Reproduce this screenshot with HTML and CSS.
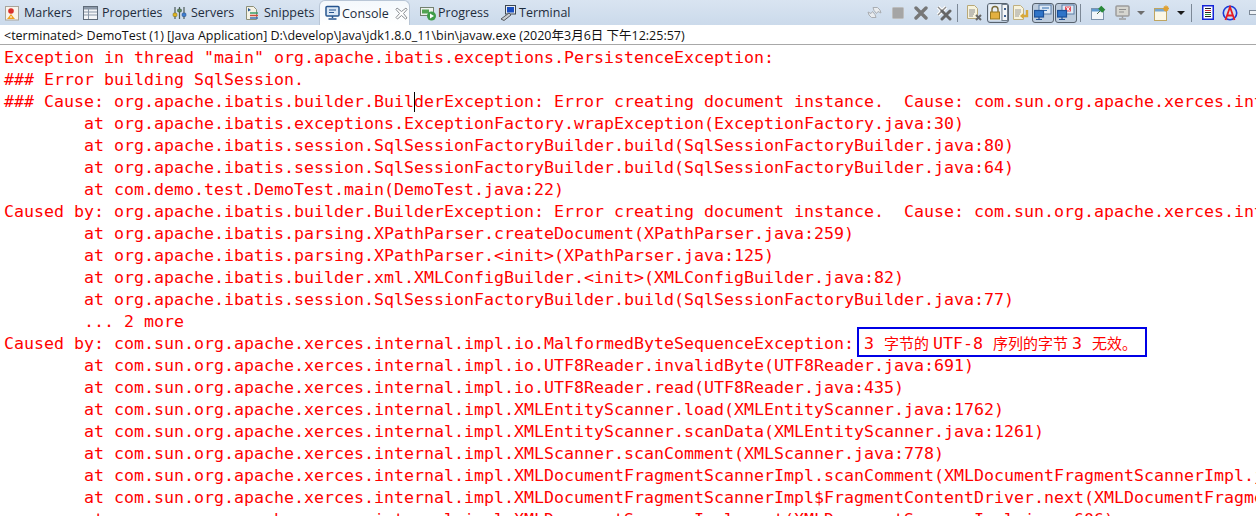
FILE: index.html
```html
<!DOCTYPE html>
<html lang="en">
<head>
<meta charset="utf-8">
<title>Console</title>
<link rel="stylesheet" href="styles.css">
</head>
<body>
<div class="view">
  <header class="bar">
    <nav class="tabs">
      <div class="tab tab-markers">
        <svg class="ico" width="16" height="16" viewBox="0 0 16 16"><rect x="1.500" y="1.500" width="13" height="13.500" fill="#f8f4ec" stroke="#a9a49a"/><circle cx="7" cy="6" r="2.800" fill="#d8302c"/><path d="M7 9l4 5H3z" fill="#f0a020"/><path d="M7 11v2" stroke="#fff"/></svg>
        <span>Markers</span>
      </div>
      <div class="tab tab-properties">
        <svg class="ico" width="15" height="14" viewBox="0 0 15 14"><rect x=".5" y=".5" width="14" height="13" fill="#f4f6f8" stroke="#5f6b78"/><rect x="1" y="1" width="13" height="2.500" fill="#8b98a8"/><path d="M5.500 3v10M1 6h13M1 9h13" stroke="#8b98a8" fill="none"/></svg>
        <span>Properties</span>
      </div>
      <div class="tab tab-servers">
        <svg class="ico" width="15" height="16" viewBox="0 0 15 16"><path d="M3 2v12M7.500 2v12M12 2v12" stroke="#4c5a58" stroke-width="1.200"/><rect x="1" y="8" width="4" height="3.500" rx="1" fill="#e2b420" stroke="#6f6a20" stroke-width=".5"/><rect x="5.500" y="4" width="4" height="3" rx="1" fill="#5a8a5a" stroke="#3a4a3a" stroke-width=".5"/><rect x="10" y="8" width="4" height="3.500" rx="1" fill="#3f7fd0" stroke="#274a80" stroke-width=".5"/></svg>
        <span>Servers</span>
      </div>
      <div class="tab tab-snippets">
        <svg class="ico" width="15" height="16" viewBox="0 0 15 16"><path d="M1.500 1.500h7l3 3v10h-10z" fill="#f4f2e6" stroke="#8c8f78"/><path d="M5 8h8" stroke="#3d9c6a" stroke-width="1.500"/><path d="M5 10.500h8" stroke="#d24a3a" stroke-width="1.500"/><path d="M5 13h8" stroke="#3d6cb0" stroke-width="1.500"/><path d="M3 3v3.500l3-1.500z" fill="#27558f"/></svg>
        <span>Snippets</span>
      </div>
      <div class="tab tab-console">
        <svg class="ico" width="15" height="16" viewBox="0 0 15 16"><rect x="1" y="1.500" width="13" height="9.500" rx="1" fill="#dbe8f6" stroke="#27558f" stroke-width="1.500"/><path d="M4 5h7M4 7.500h5" stroke="#27558f"/><path d="M7.500 11v2M3.500 14h8" stroke="#27558f" stroke-width="1.500"/></svg>
        <span>Console</span>
        <svg class="close" width="13" height="13" viewBox="0 0 13 13"><path d="M2 1l4.500 3.500L11 1l1 1.500L8.500 6.500 12 11l-1.500 1-4-3.500L2.500 12 1 10.500l3.500-4L1 2.500z" fill="#fff" stroke="#8b8f94"/></svg>
      </div>
      <div class="tab tab-progress">
        <svg class="ico" width="16" height="16" viewBox="0 0 16 16"><rect x=".5" y="2.500" width="13" height="8" fill="#eef2ee" stroke="#74806f"/><rect x="2" y="4.500" width="7" height="4" fill="#52a452"/><circle cx="11.500" cy="11" r="4.500" fill="#3f9c48"/><path d="M10 8.500l4 2.500-4 2.500z" fill="#fff"/></svg>
        <span>Progress</span>
      </div>
      <div class="tab tab-terminal">
        <svg class="ico" width="16" height="16" viewBox="0 0 16 16"><rect x="5.500" y=".5" width="10" height="8.500" fill="#e8ecf0" stroke="#3c4650"/><rect x="7" y="2" width="7" height="5.500" fill="#1a4fc0"/><path d="M1 14L9 8l2 2-7 5.500z" fill="#c8ccd0" stroke="#55595e"/></svg>
        <span>Terminal</span>
      </div>
    </nav>
    <div class="tools">
      <svg class="tool t-relaunch" width="15" height="15" viewBox="0 0 15 15"><path d="M6 2.500h4.500L13 5l1 3-3-1.500-1.500 2L7 5.500zM9 12.500H4.500L2 10 1 7l3 1.500 1.500-2L8 9.500z" fill="#e9ecef" stroke="#a9adb2"/></svg>
      <svg class="tool t-stop" width="12" height="12" viewBox="0 0 12 12"><rect x=".5" y=".5" width="11" height="11" rx="1" fill="#a5a5a5" stroke="#bdbdbd"/></svg>
      <svg class="tool t-x" width="14" height="14" viewBox="0 0 14 14"><path d="M2 2l10 10M12 2L2 12" stroke="#777" stroke-width="3.400" stroke-linecap="round"/></svg>
      <svg class="tool t-xx" width="16" height="16" viewBox="0 0 16 16"><path d="M2 2l8 8M10 2l-8 8" stroke="#fff" stroke-width="3.600"/><path d="M2 2l8 8M10 2l-8 8" stroke="#8a8a8a" stroke-width="1.400" fill="none"/><path d="M6 6l8 8M14 6l-8 8" stroke="#666" stroke-width="3" stroke-linecap="round"/></svg>
      <i class="sep"></i>
      <svg class="tool t-clear" width="15" height="16" viewBox="0 0 15 16"><path d="M.5.500h7l3 3v10H.5z" fill="#f7f3dd" stroke="#b8a878"/><path d="M2 5h6M2 7h6M2 9h5M2 11h4" stroke="#8c8c8c"/><path d="M9 10l5 5M14 10l-5 5" stroke="#666" stroke-width="2"/></svg>
      <span class="toggle t-lock"><svg width="20" height="17" viewBox="0 0 20 17"><rect x=".5" y=".5" width="13" height="16" fill="#eaf0f6"/><rect x="14" y=".5" width="5.500" height="16" fill="#f4f6f8" stroke="#6f7c8a"/><path d="M16 4h2v2h-2zM16 11h2v2h-2z" fill="#3d5f8f"/><path d="M4 8V5.500a3 3 0 0 1 6 0V8" fill="none" stroke="#7a6a3a" stroke-width="1.400"/><rect x="2.500" y="8" width="9" height="7" fill="#e3b040" stroke="#9a7a20"/></svg></span>
      <svg class="tool t-word" width="16" height="16" viewBox="0 0 16 16"><path d="M.5.500h7l3 3v11H.5z" fill="#f7f3dd" stroke="#c0b080"/><path d="M2 5h6M2 7h6M2 9h5M2 11h4" stroke="#9a9a9a"/><path d="M14 5v6H9" fill="none" stroke="#d8a838" stroke-width="2.400"/><path d="M10.500 8L7 11l3.500 3z" fill="#d8a838"/></svg>
      <span class="toggle t-out"><svg width="18" height="17" viewBox="0 0 18 17"><rect x="5" y="1" width="12" height="9" fill="#dfeaf6" stroke="#5a7ea8"/><path d="M8 4h7M8 6.500h5" stroke="#2f6cb0"/><rect x=".5" y="6.500" width="9" height="6.500" fill="#2f74c8" stroke="#1c5098" stroke-width="1.200"/><path d="M5 13v2M2 15.500h6" stroke="#1c5098" stroke-width="1.200"/></svg></span>
      <span class="toggle t-err"><svg width="18" height="17" viewBox="0 0 18 17"><rect x="5" y="1" width="12" height="9" fill="#dfeaf6" stroke="#5a7ea8"/><rect x="8" y="2.500" width="6" height="5" fill="#e8505a"/><path d="M9.500 3l3 4M12.500 3l-3 4" stroke="#fff"/><rect x=".5" y="6.500" width="9" height="6.500" fill="#2f74c8" stroke="#1c5098" stroke-width="1.200"/><path d="M5 13v2M2 15.500h6" stroke="#1c5098" stroke-width="1.200"/></svg></span>
      <i class="sep sep-b"></i>
      <svg class="tool t-pin" width="15" height="15" viewBox="0 0 15 15"><rect x=".5" y="3.500" width="12" height="11" fill="#f2f6fa" stroke="#7c93ad"/><rect x="1" y="4" width="11" height="2.500" fill="#5f9ad0"/><path d="M6 9l3-3" stroke="#4a6a4a"/><path d="M8 3l4 4M9.500 1.500L13.500 5.500" stroke="#2a8a3a" stroke-width="2.400"/></svg>
      <svg class="tool t-display" width="15" height="15" viewBox="0 0 15 15"><rect x="1" y="1" width="13" height="10" rx="1" fill="#d6d6d0" stroke="#9c9c9c" stroke-width="1.500"/><path d="M4 4.500h7M4 7h5" stroke="#8e8e8e"/><path d="M7.500 11v2M4 14h7" stroke="#9c9c9c" stroke-width="1.500"/></svg>
      <i class="caret caret-grey"></i>
      <svg class="tool t-new" width="16" height="16" viewBox="0 0 16 16"><rect x=".5" y="3.500" width="12" height="12" fill="#fbf7e6" stroke="#bfa560"/><rect x="1" y="4" width="11" height="2.500" fill="#7aa7d0"/><path d="M12 .5v6M9 3.500h6M10 1.500l4 4M14 1.500l-4 4" stroke="#e0a030" stroke-width="1.400"/></svg>
      <i class="caret"></i>
      <i class="sep sep-c"></i>
      <svg class="tool t-doc" width="12" height="15" viewBox="0 0 12 15"><rect x=".75" y=".75" width="10.500" height="13.500" fill="#fff" stroke="#1424d8" stroke-width="1.500"/><path d="M3 3.500h6" stroke="#222"/><path d="M3 5.500h6" stroke="#d03030"/><path d="M3 7.500h6" stroke="#222"/><path d="M3 9.500h6" stroke="#2a9a3a"/><path d="M3 11.500h6" stroke="#222"/></svg>
      <svg class="tool t-type" width="16" height="16" viewBox="0 0 16 16"><circle cx="8" cy="8" r="6.700" fill="none" stroke="#1a3ad8" stroke-width="1.600"/><path d="M3.500 15L8 2l4.500 13M5 10.500h6" fill="none" stroke="#e81c24" stroke-width="1.800"/></svg>
      <i class="min"></i>
    </div>
  </header>
  <div class="status">&lt;terminated&gt; DemoTest (1) [Java Application] D:\develop\Java\jdk1.8.0_11\bin\javaw.exe (2020年3月6日 下午12:25:57)</div>
  <pre class="out">Exception in thread "main" org.apache.ibatis.exceptions.PersistenceException:
### Error building SqlSession.
### Cause: org.apache.ibatis.builder.Buil<span class="cursor"></span>derException: Error creating document instance.  Cause: com.sun.org.apache.xerces.internal.impl.io.MalformedByteSequenceException
	at org.apache.ibatis.exceptions.ExceptionFactory.wrapException(ExceptionFactory.java:30)
	at org.apache.ibatis.session.SqlSessionFactoryBuilder.build(SqlSessionFactoryBuilder.java:80)
	at org.apache.ibatis.session.SqlSessionFactoryBuilder.build(SqlSessionFactoryBuilder.java:64)
	at com.demo.test.DemoTest.main(DemoTest.java:22)
Caused by: org.apache.ibatis.builder.BuilderException: Error creating document instance.  Cause: com.sun.org.apache.xerces.internal.impl.io.MalformedByteSequenceException
	at org.apache.ibatis.parsing.XPathParser.createDocument(XPathParser.java:259)
	at org.apache.ibatis.parsing.XPathParser.&lt;init&gt;(XPathParser.java:125)
	at org.apache.ibatis.builder.xml.XMLConfigBuilder.&lt;init&gt;(XMLConfigBuilder.java:82)
	at org.apache.ibatis.session.SqlSessionFactoryBuilder.build(SqlSessionFactoryBuilder.java:77)
	... 2 more
Caused by: com.sun.org.apache.xerces.internal.impl.io.MalformedByteSequenceException:<span class="note">3 <span class="cjk">字节的</span>UTF-8 <span class="cjk">序列的字节</span>3 <span class="cjk">无效。</span></span>
	at com.sun.org.apache.xerces.internal.impl.io.UTF8Reader.invalidByte(UTF8Reader.java:691)
	at com.sun.org.apache.xerces.internal.impl.io.UTF8Reader.read(UTF8Reader.java:435)
	at com.sun.org.apache.xerces.internal.impl.XMLEntityScanner.load(XMLEntityScanner.java:1762)
	at com.sun.org.apache.xerces.internal.impl.XMLEntityScanner.scanData(XMLEntityScanner.java:1261)
	at com.sun.org.apache.xerces.internal.impl.XMLScanner.scanComment(XMLScanner.java:778)
	at com.sun.org.apache.xerces.internal.impl.XMLDocumentFragmentScannerImpl.scanComment(XMLDocumentFragmentScannerImpl.java:1)
	at com.sun.org.apache.xerces.internal.impl.XMLDocumentFragmentScannerImpl$FragmentContentDriver.next(XMLDocumentFragmentScannerImpl.java:2)
	at com.sun.org.apache.xerces.internal.impl.XMLDocumentScannerImpl.next(XMLDocumentScannerImpl.java:606)</pre>
</div>
</body>
</html>
```
FILE: styles.css
```css
html, body {
  margin: 0;
  padding: 0;
  background: #fff;
}
.view {
  width: 1256px;
  height: 516px;
  overflow: hidden;
  display: flex;
  flex-direction: column;
  font-family: "Open Sans", "Noto Sans CJK SC", sans-serif;
}
.bar {
  flex: none;
  height: 25px;
  display: flex;
  background: linear-gradient(#d9e4f1, #cbdaeb);
  overflow: hidden;
}
.tabs {
  display: flex;
  align-items: stretch;
}
.tab {
  display: flex;
  align-items: center;
  gap: 4px;
  font-size: 12.5px;
  color: #1f2d3d;
  white-space: nowrap;
}
.ico {
  flex: none;
}
.tab-markers { margin-left: 4px; width: 79px; }
.tab-properties { width: 89px; }
.tab-servers { width: 73px; }
.tab-snippets { width: 74px; }
.tab-console {
  width: 91px;
  box-sizing: border-box;
  padding-left: 5px;
  gap: 2px;
  background: linear-gradient(#f4f8fc, #fff);
  border: 1px solid #b9c6d6;
  border-bottom: 0;
  border-radius: 6px 6px 0 0;
}
.close { margin-left: 4px; flex: none; }
.tab-progress { margin-left: 10px; width: 80px; gap: 2px; }
.tab-terminal { width: 80px; gap: 3px; }
.tools {
  margin-left: auto;
  display: flex;
  align-items: center;
  width: 389px;
  flex: none;
}
.tool { flex: none; }
.t-stop { margin-left: 10px; }
.t-x { margin-left: 10px; }
.t-xx { margin-left: 8px; }
.sep {
  flex: none;
  width: 1px;
  height: 18px;
  background: #7c8896;
  margin-left: 5px;
}
.t-clear { margin-left: 9px; }
.toggle {
  flex: none;
  display: flex;
  align-items: center;
  justify-content: center;
  box-sizing: border-box;
  height: 20px;
  border: 1px solid #58636f;
  border-radius: 3px;
  background: #bccbdc;
}
.t-lock { width: 22px; margin-left: 5px; }
.t-word { margin-left: 4px; }
.t-out { width: 22px; margin-left: 3px; }
.t-err { width: 22px; margin-left: 1px; }
.sep-b { margin-left: 3px; }
.t-pin { margin-left: 10px; }
.t-display { margin-left: 9px; }
.caret {
  flex: none;
  width: 0;
  height: 0;
  margin-left: 7px;
  border-left: 4px solid transparent;
  border-right: 4px solid transparent;
  border-top: 4px solid #1a1a1a;
}
.caret-grey { border-top-color: #6e6e6e; }
.t-new { margin-left: 9px; }
.sep-c { margin-left: 6px; }
.t-doc { margin-left: 10px; }
.t-type { margin-left: 8px; }
.min {
  flex: none;
  width: 12px;
  height: 3px;
  margin-left: 11px;
  background: #eef2f6;
  border: 1px solid #7c8896;
}
.status {
  flex: none;
  box-sizing: border-box;
  height: 20px;
  padding-left: 4px;
  font-size: 12.5px;
  line-height: 21px;
  color: #111;
  border-bottom: 1px solid #a8a8a8;
  white-space: nowrap;
}
.out {
  flex: 1;
  margin: 0;
  padding: 2px 0 0 4px;
  overflow: hidden;
  font-family: "DejaVu Sans Mono", monospace;
  font-size: 16.62px;
  line-height: 22px;
  color: #f00;
  tab-size: 8;
  white-space: pre;
}
.cursor {
  display: inline-block;
  width: 1px;
  height: 20px;
  margin-right: -1px;
  vertical-align: -5px;
  background: #000;
}
.note {
  display: inline-block;
  box-sizing: border-box;
  width: 290px;
  height: 30px;
  margin: -6px 0 -2px 3px;
  padding-left: 5px;
  border: 2px solid #0000e6;
  line-height: 28px;
  vertical-align: top;
}
.cjk {
  margin-right: 4px;
  font-family: "Noto Sans CJK SC", sans-serif;
  font-size: 15px;
}
```
